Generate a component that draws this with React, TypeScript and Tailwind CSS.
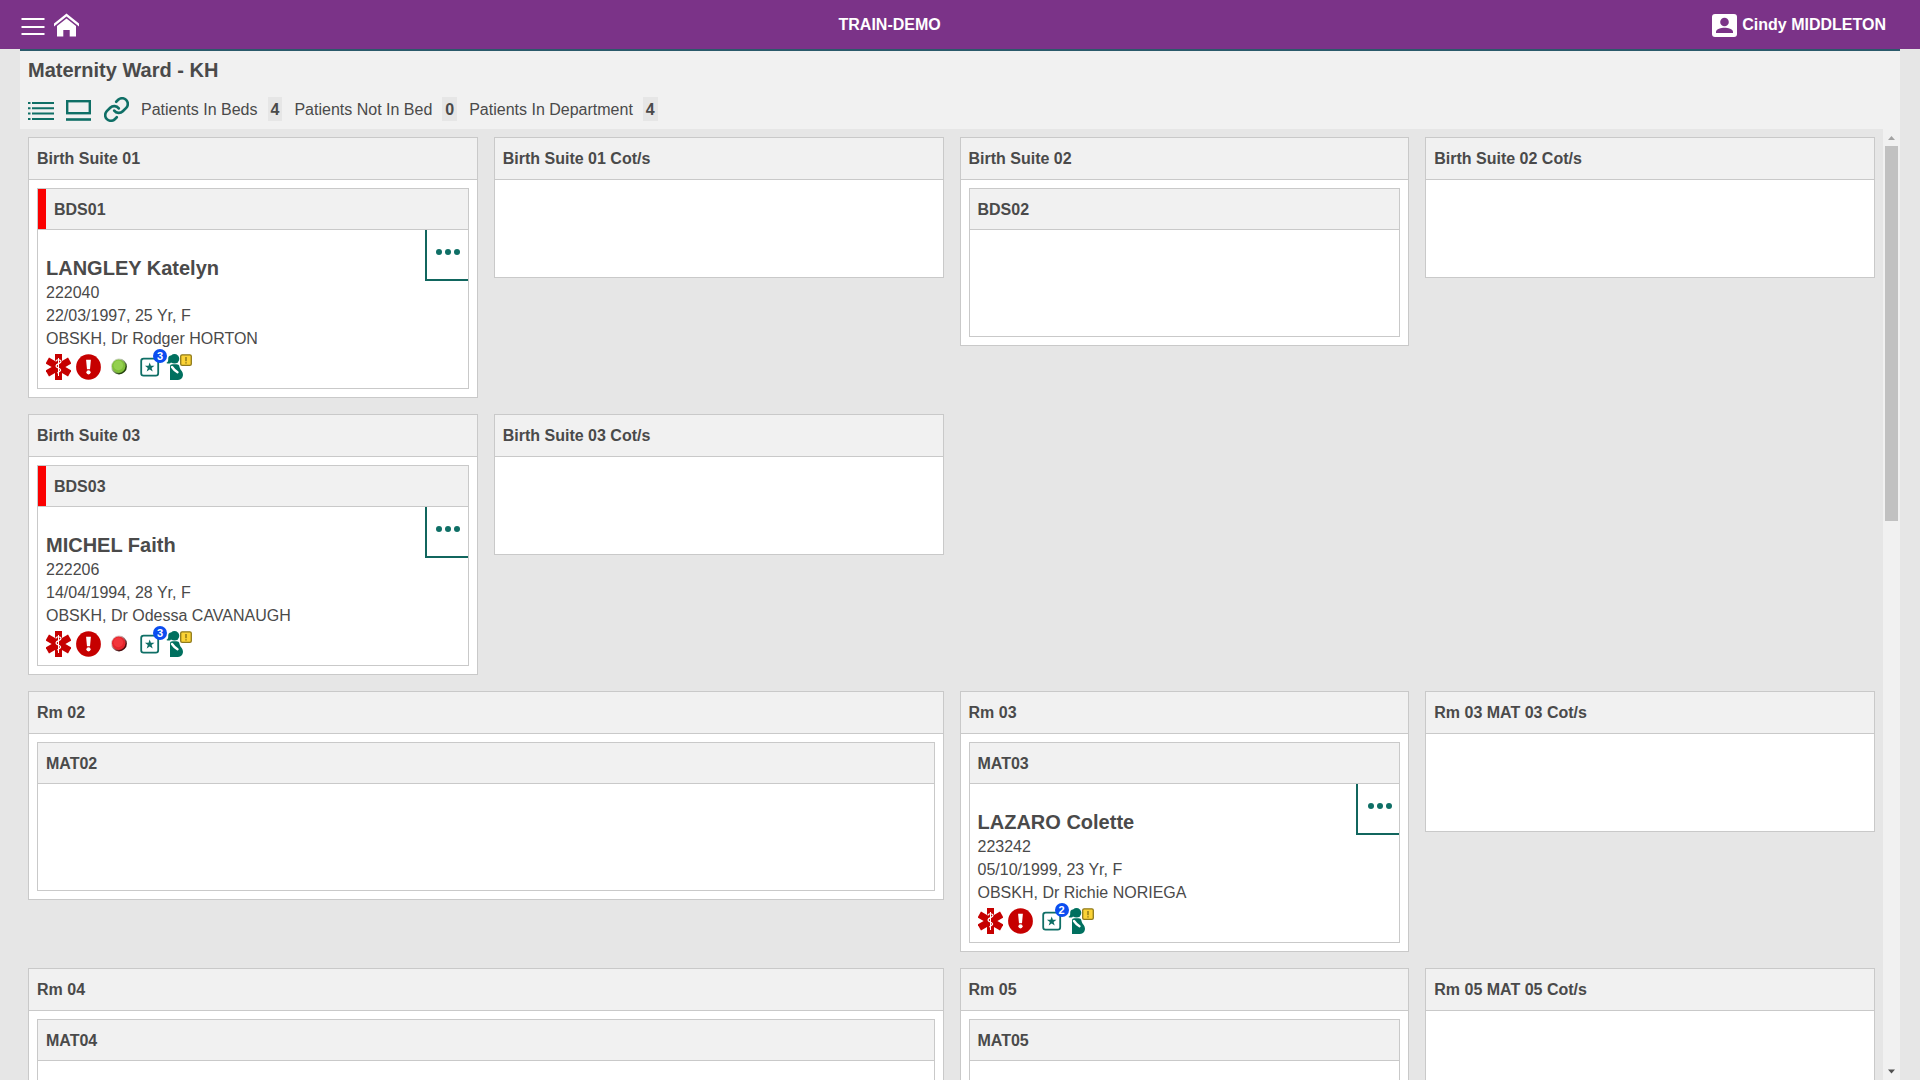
import React from "react";

type Patient = {
  name: string;
  id: string;
  born: string;
  doctor: string;
  light?: "green" | "red";
  orders: number;
};

type Bed = { code: string; flagged?: boolean; patient?: Patient };

type Room = { title: string; wide?: boolean; bed?: Bed };

const rows: Room[][] = [
  [
    {
      title: "Birth Suite 01",
      bed: {
        code: "BDS01",
        flagged: true,
        patient: {
          name: "LANGLEY Katelyn",
          id: "222040",
          born: "22/03/1997, 25 Yr, F",
          doctor: "OBSKH, Dr Rodger HORTON",
          light: "green",
          orders: 3,
        },
      },
    },
    { title: "Birth Suite 01 Cot/s" },
    { title: "Birth Suite 02", bed: { code: "BDS02" } },
    { title: "Birth Suite 02 Cot/s" },
  ],
  [
    {
      title: "Birth Suite 03",
      bed: {
        code: "BDS03",
        flagged: true,
        patient: {
          name: "MICHEL Faith",
          id: "222206",
          born: "14/04/1994, 28 Yr, F",
          doctor: "OBSKH, Dr Odessa CAVANAUGH",
          light: "red",
          orders: 3,
        },
      },
    },
    { title: "Birth Suite 03 Cot/s" },
  ],
  [
    { title: "Rm 02", wide: true, bed: { code: "MAT02" } },
    {
      title: "Rm 03",
      bed: {
        code: "MAT03",
        patient: {
          name: "LAZARO Colette",
          id: "223242",
          born: "05/10/1999, 23 Yr, F",
          doctor: "OBSKH, Dr Richie NORIEGA",
          orders: 2,
        },
      },
    },
    { title: "Rm 03 MAT 03 Cot/s" },
  ],
  [
    { title: "Rm 04", wide: true, bed: { code: "MAT04" } },
    { title: "Rm 05", bed: { code: "MAT05" } },
    { title: "Rm 05 MAT 05 Cot/s" },
  ],
];

const counts = [
  { label: "Patients In Beds", value: 4 },
  { label: "Patients Not In Bed", value: 0 },
  { label: "Patients In Department", value: 4 },
];

function StarOfLife() {
  return (
    <svg width="25" height="26" viewBox="0 0 25 26" role="img" aria-label="Medical alert">
      <g fill="#c60000">
        <rect x="9" y="0" width="7" height="26" />
        <rect x="9" y="0" width="7" height="26" transform="rotate(60 12.5 13)" />
        <rect x="9" y="0" width="7" height="26" transform="rotate(-60 12.5 13)" />
      </g>
      <path d="M12.5 4v18" stroke="#fff" strokeWidth="1" />
      <path
        d="M10 7.5c0-2.200 5-2.400 5 0 0 2.200-5 2-5 4.400 0 2.200 4.600 2 4.600 4.200 0 1.800-3 1.600-3 3.200"
        fill="none"
        stroke="#fff"
        strokeWidth="1.200"
      />
    </svg>
  );
}

function AlertCircle() {
  return (
    <svg width="25" height="26" viewBox="0 0 25 26" role="img" aria-label="Alert">
      <ellipse cx="12.5" cy="13" rx="12.4" ry="12.7" fill="#c60000" />
      <path d="M10.1 5.8h4.800l-.9 9.400h-3z" fill="#fff" />
      <circle cx="12.5" cy="18.3" r="2.1" fill="#fff" />
    </svg>
  );
}

function StatusLight({ color }: { color: "green" | "red" }) {
  const green = color === "green";
  return (
    <svg width="25" height="26" viewBox="0 0 25 26" role="img" aria-label={`Status ${color}`}>
      <defs>
        <linearGradient id={`rim-${color}`} x1="0" y1="0" x2="1" y2="1">
          <stop offset="0.3" stopColor={green ? "#c9d3bd" : "#dcc0c0"} />
          <stop offset="0.75" stopColor={green ? "#24420c" : "#4a0a0c"} />
        </linearGradient>
      </defs>
      <circle cx="13" cy="12.5" r="7.9" fill={`url(#rim-${color})`} />
      <circle cx="12.7" cy="12.2" r="6.7" fill={green ? "#7fbf3a" : "#e5262c"} />
      <circle cx="12.3" cy="11.4" r="4.8" fill={green ? "#94d04f" : "#f2363c"} />
    </svg>
  );
}

function Orders({ count }: { count: number }) {
  return (
    <span className="relative block h-[26px] w-[25px]">
      <svg width="25" height="26" viewBox="0 0 25 26" role="img" aria-label="Orders">
        <rect x="5.2" y="4.7" width="17" height="17" rx="2.4" fill="#fff" stroke="#0f6f66" strokeWidth="1.8" />
        <path
          d="M13.7 8.4l1.2 3.4h3.6l-2.9 2.2 1.1 3.5-3-2.1-3 2.1 1.1-3.5-2.9-2.2h3.6z"
          fill="#0f6f66"
        />
      </svg>
      <span className="absolute -top-[5px] left-[17px] flex h-[14px] w-[14px] items-center justify-center rounded-full bg-[#0b4df0] text-[11px] leading-none font-bold text-white">
        {count}
      </span>
    </span>
  );
}

function Maternity() {
  return (
    <svg width="28" height="26" viewBox="0 0 28 26" role="img" aria-label="Maternity notice">
      <g fill="#00705f">
        <circle cx="8.5" cy="4.8" r="4.8" />
        <path d="M5.5 1.6C3.2 1.4 2 3.2 2.200 5.200 2.300 7 1.800 8.200.4 9c2 1 4.200.6 5.200-1.300z" />
        <path d="M4 12.5C4 11 5 10.200 6.500 10.200h4c1.700 0 2.600.8 2.900 2.200.4 1.900 1.100 3 2.300 4.700 1.300 2 1.900 4.200.6 6.400-.9 1.600-2.300 2.500-4.500 2.500H4z" />
      </g>
      <path d="M6 13c1.500 2.200 3 3.800 5.500 5.200" fill="none" stroke="#fff" strokeWidth="2.4" strokeLinecap="round" />
      <rect x="14.7" y=".8" width="10.6" height="10.6" rx="1.4" fill="#fbd336" stroke="#8f7a1c" strokeWidth="1.3" />
      <path d="M20 3v4.200M20 8.300v1.300" stroke="#806c14" strokeWidth="1.3" />
    </svg>
  );
}

function PatientDetails({ patient }: { patient: Patient }) {
  return (
    <div className="flex min-h-[158px] items-start justify-between">
      <div className="min-w-0 pt-[26px] pl-2 leading-[23px]">
        <h4 className="text-xl leading-[25px] font-bold">{patient.name}</h4>
        <p>{patient.id}</p>
        <p>{patient.born}</p>
        <p>{patient.doctor}</p>
        <div className="mt-1 flex gap-[5px]">
          <StarOfLife />
          <AlertCircle />
          {patient.light && <StatusLight color={patient.light} />}
          <Orders count={patient.orders} />
          <Maternity />
        </div>
      </div>
      <button
        type="button"
        aria-label={`More actions for ${patient.name}`}
        className="flex h-[51px] w-[43px] shrink-0 items-start justify-center gap-[3px] border-b-2 border-l-2 border-[#11665e] pt-[19px] pl-0.5"
      >
        <span className="size-1.5 rounded-full bg-[#0f6f66]" />
        <span className="size-1.5 rounded-full bg-[#0f6f66]" />
        <span className="size-1.5 rounded-full bg-[#0f6f66]" />
      </button>
    </div>
  );
}

function BedCard({ bed }: { bed: Bed }) {
  return (
    <div className="border border-[#c9c9c9] bg-white">
      <div className="flex h-[41px] border-b border-[#c9c9c9] bg-[#f1f1f1]">
        {bed.flagged && <span className="w-2 bg-[#fb0000]" />}
        <h3 className="self-center px-2 pt-0.5 font-bold">{bed.code}</h3>
      </div>
      {bed.patient ? <PatientDetails patient={bed.patient} /> : <div className="h-[106px]" />}
    </div>
  );
}

function RoomCard({ room }: { room: Room }) {
  return (
    <section className={`border border-[#c9c9c9] bg-white ${room.wide ? "col-span-2" : ""}`}>
      <div className="flex h-[42px] items-center border-b border-[#c9c9c9] bg-[#f1f1f1] px-2">
        <h2 className="font-bold">{room.title}</h2>
      </div>
      {room.bed ? (
        <div className="p-2">
          <BedCard bed={room.bed} />
        </div>
      ) : (
        <div className="h-[97px]" />
      )}
    </section>
  );
}

function TopBar() {
  return (
    <header className="flex h-[49px] shrink-0 items-center justify-between bg-[#7b3388] pr-[34px] pl-5 font-bold text-white">
      <div className="flex items-center gap-2">
        <button type="button" aria-label="Menu">
          <svg width="26" height="25" viewBox="0 0 26 25" className="block">
            <path d="M1.500 7h23M1.500 15h23M1.500 22h23" stroke="#fff" strokeWidth="2" />
          </svg>
        </button>
        <a href="#home" aria-label="Home">
          <svg width="25" height="25" viewBox="0 -1 25 25" className="block">
            <path d="M12.500.5L25 10.600v2.800L12.500 3.600 0 13.400v-2.800z" fill="#fff" />
            <path d="M12.500 5.600L22 13v10.500h-6.300V17H9.300v6.500H3V13z" fill="#fff" />
          </svg>
        </a>
      </div>
      <h1>TRAIN-DEMO</h1>
      <button type="button" className="flex items-center gap-[5px] pl-3">
        <svg width="25" height="25" viewBox="0 0 25 25" aria-hidden="true">
          <rect y="2" width="25" height="23" rx="3" fill="#fff" />
          <circle cx="12.5" cy="10" r="4.3" fill="#7b3388" />
          <path d="M4 21v-1.200c0-2.700 5.200-4 8.500-4s8.500 1.300 8.500 4V21z" fill="#7b3388" />
        </svg>
        Cindy MIDDLETON
      </button>
    </header>
  );
}

function WardHeader() {
  return (
    <div className="border-t-2 border-[#2b5a6b] bg-[#f1f1f1] px-2 pt-1.5 pb-2">
      <h2 className="text-xl leading-[26px] font-bold">Maternity Ward - KH</h2>
      <div className="mt-3.5 flex h-6 items-center gap-3">
        <button type="button" aria-label="List view">
          <svg width="26" height="24" viewBox="0 0 26 24" className="block">
            <path
              d="M0 6h2.500M4 6h22M0 11.300h2.500M4 11.300h22M0 16.600h2.500M4 16.600h22M0 22h2.500M4 22h22"
              stroke="#0f6f66"
              strokeWidth="2"
            />
          </svg>
        </button>
        <button type="button" aria-label="Card view">
          <svg width="26" height="24" viewBox="0 0 26 24" className="block">
            <rect x="1.2" y="4.2" width="22.6" height="12" fill="none" stroke="#0f6f66" strokeWidth="2.4" />
            <path d="M0 22.500h25" stroke="#0f6f66" strokeWidth="2.6" />
          </svg>
        </button>
        <button type="button" aria-label="Link">
          <svg
            width="25"
            height="25"
            viewBox="1 1 22 22"
            fill="none"
            stroke="#0f6f66"
            strokeWidth="2.3"
            strokeLinecap="round"
            className="block"
          >
            <path d="M10 13a5 5 0 0 0 7.540.54l3-3a5 5 0 0 0-7.070-7.070l-1.720 1.710" />
            <path d="M14 11a5 5 0 0 0-7.540-.54l-3 3a5 5 0 0 0 7.070 7.070l1.710-1.710" />
          </svg>
        </button>
        {counts.map((c) => (
          <div key={c.label} className="flex items-center gap-2.5 leading-[22px]">
            <span className="pt-0.5">{c.label}</span>
            <span className="bg-[#e6e6e6] px-[3px] pt-0.5 font-bold">{c.value}</span>
          </div>
        ))}
      </div>
    </div>
  );
}

function ScrollTrack() {
  return (
    <div className="flex w-[17px] shrink-0 flex-col items-center bg-[#f1f1f1]" aria-hidden="true">
      <svg width="17" height="17" viewBox="0 0 17 17" className="shrink-0">
        <path d="M5 11l3.500-4 3.500 4z" fill="#a3a3a3" />
      </svg>
      <div className="w-[13px] flex-9 bg-[#c1c1c1]" />
      <div className="flex-13" />
      <svg width="17" height="17" viewBox="0 0 17 17" className="shrink-0">
        <path d="M5 6.500l3.500 4 3.500-4z" fill="#505050" />
      </svg>
    </div>
  );
}

export default function App() {
  return (
    <div className="flex h-screen flex-col overflow-hidden bg-[#e6e6e6] font-['Liberation_Sans',Arial,sans-serif] text-base text-[#4a4a4a]">
      <TopBar />
      <main className="mx-5 flex min-h-0 grow flex-col">
        <WardHeader />
        <div className="flex min-h-0 grow">
          <div className="flex min-w-0 grow flex-col gap-4 overflow-hidden p-2">
            {rows.map((rooms) => (
              <div key={rooms[0].title} className="grid shrink-0 grid-cols-4 items-start gap-4">
                {rooms.map((room) => (
                  <RoomCard key={room.title} room={room} />
                ))}
              </div>
            ))}
          </div>
          <ScrollTrack />
        </div>
      </main>
    </div>
  );
}
